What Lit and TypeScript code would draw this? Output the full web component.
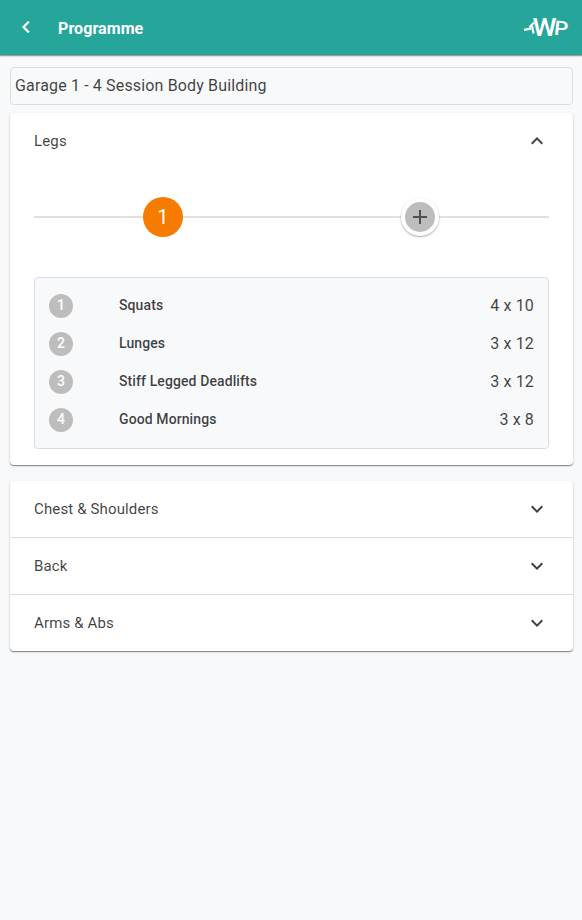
import { LitElement, html, css, svg } from "lit";
import { customElement, property } from "lit/decorators.js";

interface Exercise { name: string; volume: string; }

const exercises: Exercise[] = [
  { name: "Squats", volume: "4 x 10" },
  { name: "Lunges", volume: "3 x 12" },
  { name: "Stiff Legged Deadlifts", volume: "3 x 12" },
  { name: "Good Mornings", volume: "3 x 8" },
];

const sessions = ["Chest & Shoulders", "Back", "Arms & Abs"];

const chevrons = {
  up: "M12 8l-6 6 1.41 1.41L12 10.83l4.59 4.58L18 14z",
  down: "M16.59 8.59L12 13.17 7.41 8.59 6 10l6 6 6-6z",
};

@customElement("app-header")
class AppHeader extends LitElement {
  static styles = css`
    :host { display: flex; align-items: center; height: 55px; box-sizing: border-box;
      background: #26a69a; color: #fff; padding: 0 14px 0 14px; position: relative;
      box-shadow: 0 1px 1px rgba(0,0,0,.32), 0 1px 3px rgba(0,0,0,.12); }
    .back { width: 24px; height: 24px; margin-bottom: 1px; fill: #fff; stroke: #fff; stroke-width: .3; }
    .title { flex: 1; margin: 2px 0 0 20px; font-size: 16px; line-height: 24px; font-weight: 700; letter-spacing: .08px; }
    .logo { width: 44px; height: 26px; margin-bottom: 2px; overflow: visible; }
    .logo text { fill: #fff; font-family: Roboto, sans-serif; font-weight: 500; }
  `;
  render() {
    return html`
      <svg class="back" viewBox="0 0 24 24"><path d="M15.41 7.41L14 6l-6 6 6 6 1.41-1.41L10.83 12z"/></svg>
      <div class="title">Programme</div>
      <svg class="logo" viewBox="0 0 44 26" aria-label="AWP">
        ${svg`<path d="M0 15.8L7 14.6M10 8.5L5.5 13.2M7.6 10.5L9.6 19.5" fill="none" stroke="#fff" stroke-width="2.2"/>
        <text x="8.6" y="21.8" font-size="26.5" textLength="24" lengthAdjust="spacingAndGlyphs">W</text>
        <text transform="translate(29.6 20.4) rotate(6)" font-size="20" textLength="14" lengthAdjust="spacingAndGlyphs">P</text>`}
      </svg>`;
  }
}

@customElement("panel-header")
class PanelHeader extends LitElement {
  @property() label = "";
  @property({ type: Boolean }) open = false;
  static styles = css`
    :host { display: flex; align-items: center; justify-content: space-between; height: 56px;
      padding: 0 24px; font-size: 15px; color: rgba(0,0,0,.75); letter-spacing: .14px; }
    svg { width: 24px; height: 24px; fill: #424242; }
  `;
  render() {
    return html`<span>${this.label}</span>
      <svg viewBox="0 0 24 24"><path d=${this.open ? chevrons.up : chevrons.down} /></svg>`;
  }
}

@customElement("week-stepper")
class WeekStepper extends LitElement {
  static styles = css`
    :host { display: grid; grid-template-columns: 1fr 1fr; align-items: center; justify-items: center;
      height: 56px; margin: 20px 24px 32px;
      background: linear-gradient(#e0e0e0, #e0e0e0) 0 27px / 100% 2px no-repeat; }
    .week { width: 40px; height: 40px; border-radius: 50%; background: #f57c00; color: #fff;
      display: flex; align-items: center; justify-content: center; font-size: 20px; }
    .add { width: 38px; height: 38px; border-radius: 50%; background: #fff;
      display: flex; align-items: center; justify-content: center;
      box-shadow: 0 1px 2px rgba(0,0,0,.34); }
    .add svg { width: 24px; height: 24px; padding: 3px; border-radius: 50%; background: #bdbdbd; fill: #505050; }
  `;
  render() {
    return html`<div class="week">1</div>
      <div class="add"><svg viewBox="0 0 24 24"><path d="M19 13h-6v6h-2v-6H5v-2h6V5h2v6h6z"/></svg></div>`;
  }
}

@customElement("exercise-list")
class ExerciseList extends LitElement {
  static styles = css`
    :host { display: block; margin: 0 24px 16px; padding: 9px 14px 9px; border: 1px solid #dadce0;
      border-radius: 4px; background: #f8f9fb; color: rgba(0,0,0,.75); }
    .row { display: grid; grid-template-columns: 70px 1fr auto; align-items: center; height: 38px; }
    .number { width: 24px; height: 24px; line-height: 23px; border-radius: 50%; background: #bdbdbd;
      color: #fff; text-align: center; font-size: 14px; font-weight: 500; }
    .name, .volume { padding-bottom: 2px; }
    .name { font-size: 14px; font-weight: 500; letter-spacing: .1px; }
    .volume { font-size: 16px; letter-spacing: .15px; }
  `;
  render() {
    return exercises.map((item, i) => html`<div class="row">
      <span class="number">${i + 1}</span><span class="name">${item.name}</span><span class="volume">${item.volume}</span>
    </div>`);
  }
}

@customElement("app-root")
class AppRoot extends LitElement {
  static styles = css`
    :host { display: block; min-height: 920px; background: #f8f9fb; font-family: Roboto, sans-serif; }
    main { padding: 12px 9px 0 10px; }
    .programme { height: 38px; box-sizing: border-box; border: 1px solid #dadce0; border-radius: 4px;
      padding: 0 4px; line-height: 36px; font-size: 16px; letter-spacing: .15px; color: rgba(0,0,0,.75); }
    .panel { background: #fff; border-radius: 4px; margin-top: 8px; overflow: hidden;
      box-shadow: 0 1px 1px rgba(0,0,0,.42), 0 1px 3px rgba(0,0,0,.12); }
    .panel + .panel { margin-top: 16px; }
    .divided { border-top: 1px solid #dadce0; }
  `;
  render() {
    return html`<app-header></app-header>
      <main>
        <div class="programme">Garage 1 - 4 Session Body Building</div>
        <section class="panel">
          <panel-header label="Legs" open></panel-header>
          <week-stepper></week-stepper>
          <exercise-list></exercise-list>
        </section>
        <section class="panel">
          ${sessions.map((name, i) => html`<panel-header class=${i ? "divided" : ""} label=${name}></panel-header>`)}
        </section>
      </main>`;
  }
}
